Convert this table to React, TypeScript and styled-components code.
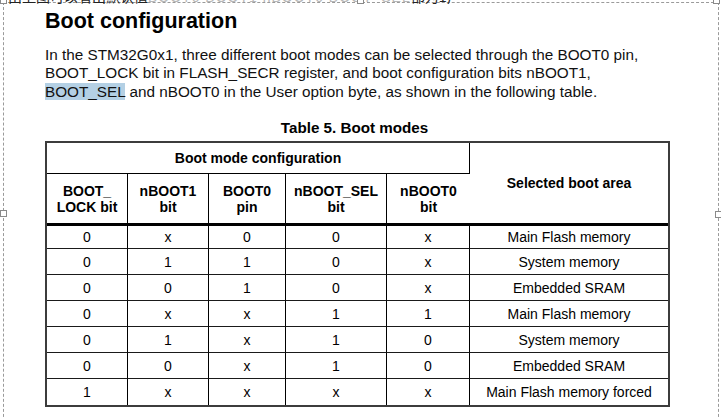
import React from 'react'
import styled, {createGlobalStyle} from 'styled-components'

const GlobalStyle = createGlobalStyle`
  html, body {
    margin: 0;
    padding: 0;
    background: #fff;
  }
  body {
    font-family: "Liberation Sans", Arial, sans-serif;
    color: #111;
  }
`

const Page = styled.div`
  position: relative;
  width: 721px;
  height: 418px;
  overflow: hidden;
  background: #fff;
`

// the line above is scrolled out of view, only the feet of its glyphs show
const CutLine = styled.div`
  position: absolute;
  top: -10px;
  left: 8px;
  height: 14px;
  overflow: hidden;
  white-space: nowrap;
  font-family: "Liberation Sans", "Noto Sans CJK SC", sans-serif;
  font-size: 14px;
  line-height: 14px;
  color: #222;
  z-index: 2;
`

const Faded = styled.span`
  color: #b8b8b8;
  letter-spacing: 1px;
`

const Frame = styled.div`
  box-sizing: border-box;
  width: 716px;
  height: 430px;
  margin: 2px 0 0 3px;
  border: 1px dashed #9a9a9a;
  border-bottom: none;
  padding: 6px 0 0 41px;
`

const Handle = styled.div<{x: number; y: number}>`
  position: absolute;
  left: ${({x}) => x}px;
  top: ${({y}) => y}px;
  width: 5px;
  height: 5px;
  background: #fff;
  border: 1px solid #8a8a8a;
  z-index: 3;
`

const Heading = styled.h1`
  margin: 0;
  font-size: 21.5px;
  line-height: 25px;
  font-weight: bold;
  color: #000;
`

const Para = styled.p`
  margin: 12px 0 0;
  font-size: 15.3px;
  line-height: 18.4px;
  color: #111;
  white-space: nowrap;
`

const Mark = styled.span`
  background: #b4d0e4;
`

const Caption = styled.div`
  width: 625px;
  margin-top: 18px;
  text-align: center;
  font-size: 15.2px;
  line-height: 18px;
  font-weight: bold;
  color: #000;
  padding-right: 6px;
  box-sizing: border-box;
`

const Table = styled.table`
  margin-top: 4px;
  width: 625px;
  table-layout: fixed;
  border-collapse: separate;
  border-spacing: 0;
  border: 2px solid #3c3c3c;
  box-sizing: border-box;
`

const Th = styled.th<{thick?: boolean}>`
  box-sizing: border-box;
  padding: 0;
  font-size: 14px;
  line-height: 16px;
  font-weight: bold;
  color: #000;
  text-align: center;
  vertical-align: middle;
  border-right: 1px solid #000;
  border-bottom: ${({thick}) => (thick ? '3px solid #000' : '1px solid #000')};

  &:last-child {
    border-right: none;
  }
`

const TopRow = styled.tr`
  height: 31px;
`

const NameRow = styled.tr`
  height: 52px;
`

const DataRow = styled.tr`
  height: 26px;

  &:first-child {
    height: 23px;
  }

  &:last-child td {
    border-bottom: none;
  }
`

const Td = styled.td`
  box-sizing: border-box;
  padding: 0;
  font-size: 14px;
  line-height: 16px;
  color: #000;
  text-align: center;
  vertical-align: middle;
  border-right: 1px solid #000;
  border-bottom: 1px solid #1a1a1a;

  &:last-child {
    border-right: none;
  }
`

const widths = [81, 81, 77, 101, 83, 198]

const rows: string[][] = [
  ['0', 'x', '0', '0', 'x', 'Main Flash memory'],
  ['0', '1', '1', '0', 'x', 'System memory'],
  ['0', '0', '1', '0', 'x', 'Embedded SRAM'],
  ['0', 'x', 'x', '1', '1', 'Main Flash memory'],
  ['0', '1', 'x', '1', '0', 'System memory'],
  ['0', '0', 'x', '1', '0', 'Embedded SRAM'],
  ['1', 'x', 'x', 'x', 'x', 'Main Flash memory forced'],
]

const names: [string, string][] = [
  ['BOOT_', 'LOCK bit'],
  ['nBOOT1', 'bit'],
  ['BOOT0', 'pin'],
  ['nBOOT_SEL', 'bit'],
  ['nBOOT0', 'bit'],
]

export default function App() {
  return (
    <Page>
      <GlobalStyle />
      <CutLine>
        由上图可以看出默认值<Faded>BOOT0 BOOT1 nBOOT0 BOOT_SEL</Faded>都为1)
      </CutLine>
      <Handle x={0} y={-3} />
      <Handle x={357} y={-3} />
      <Handle x={713} y={-3} />
      <Handle x={0} y={210} />
      <Handle x={715} y={211} />
      <Frame>
        <Heading>Boot configuration</Heading>
        <Para>
          In the STM32G0x1, three different boot modes can be selected through the BOOT0 pin,
          <br />
          BOOT_LOCK bit in FLASH_SECR register, and boot configuration bits nBOOT1,
          <br />
          <Mark>BOOT_SEL</Mark> and nBOOT0 in the User option byte, as shown in the following table.
        </Para>
        <Caption>Table 5. Boot modes</Caption>
        <Table>
          <colgroup>
            {widths.map((w, i) => (
              <col key={i} style={{width: w}} />
            ))}
          </colgroup>
          <thead>
            <TopRow>
              <Th colSpan={5}>Boot mode configuration</Th>
              <Th rowSpan={2} thick>
                Selected boot area
              </Th>
            </TopRow>
            <NameRow>
              {names.map(([a, b]) => (
                <Th key={a} thick>
                  {a}
                  <br />
                  {b}
                </Th>
              ))}
            </NameRow>
          </thead>
          <tbody>
            {rows.map((r, i) => (
              <DataRow key={i}>
                {r.map((c, j) => (
                  <Td key={j}>{c}</Td>
                ))}
              </DataRow>
            ))}
          </tbody>
        </Table>
      </Frame>
    </Page>
  )
}
